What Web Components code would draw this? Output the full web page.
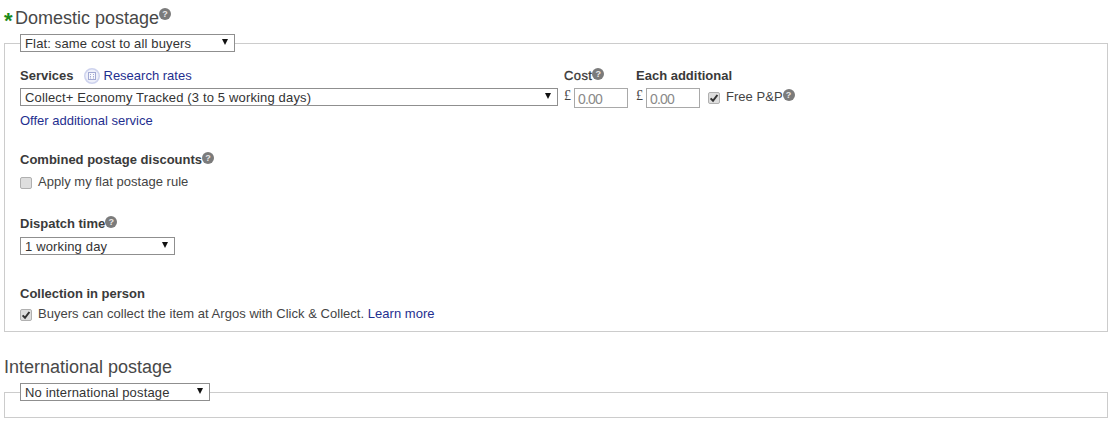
<!DOCTYPE html>
<html>
<head>
<meta charset="utf-8">
<title>Postage</title>
<style>
  html, body { margin: 0; background: #fff; }
  body { font: 13px/15px "Liberation Sans", Arial, sans-serif; color: #333; }
</style>
</head>
<body>
<template id="help-tpl">
  <style>
    :host { display: inline-block; width: 12px; height: 12px; border-radius: 50%; background: #7b7b7b; color: #e8e8e8;
      font: bold 9px/12px "Liberation Sans", Arial, sans-serif; text-align: center; vertical-align: 3px; }
  </style>?
</template>
<template id="select-tpl">
  <style>
    :host { display: inline-flex; align-items: center; justify-content: space-between; box-sizing: border-box; height: 18px;
      border: 1px solid #8f8f8f; background: #fff; color: #333; padding: 2px 6px 0 4px; font: 13px/16px "Liberation Sans", Arial, sans-serif;
      letter-spacing: .15px; white-space: nowrap; vertical-align: top; }
    svg { flex: none; margin-top: -4px; }
  </style>
  <slot></slot>
  <svg width="6" height="6" viewBox="0 0 6 6"><path d="M0 0h6L3 6z" fill="#111"/></svg>
</template>
<template id="check-tpl">
  <style>
    :host { display: flex; align-items: center; gap: 6px; color: #444; white-space: nowrap; letter-spacing: .03px; }
    .box { flex: none; box-sizing: border-box; width: 12px; height: 12px; margin-top: 2px; border: 1px solid #b0b0b0; border-radius: 2px; background: #dedede; display: flex; }
    svg { display: none; }
    :host([checked]) svg { display: block; }
  </style>
  <span class="box"><svg width="10" height="10" viewBox="0 0 10 10"><path d="M1.6 5.4 4 7.8 8.4 2" fill="none" stroke="#333" stroke-width="2"/></svg></span>
  <span><slot></slot></span>
</template>
<template id="money-tpl">
  <style>
    :host { display: flex; align-items: flex-start; color: #444; font: 13px/15px "Liberation Sans", Arial, sans-serif; }
    .cur { width: 10px; font: 14px/16px "Liberation Serif", serif; }
    input { box-sizing: border-box; width: 54px; height: 20px; margin: 0; padding: 1px 3px 0; border: 1px solid #a9a9a9; background: #fff; color: #8a8a8a;
      font: 14px/16px "Liberation Sans", Arial, sans-serif; letter-spacing: -.8px; outline: none; }
  </style>
  <span class="cur">£</span><input value="0.00">
</template>
<template id="section-tpl">
  <style>
    :host { display: block; }
    h2 { margin: 0 0 5px; font: normal 18px/21px "Liberation Sans", Arial, sans-serif; color: #484848; display: flex; align-items: flex-start; }
    .req { display: none; width: 11px; height: 21px; color: #1a8a1a; font: bold 22px/26px "Liberation Sans", Arial, sans-serif; }
    :host([required]) .req { display: inline-block; }
    fieldset { margin: 0; padding: 0 15px; border: 1px solid #ccc; min-width: 0; }
    legend { padding: 0; margin: 0; display: block; height: 18px; }
    ::slotted(post-select) { display: inline-flex; }
  </style>
  <h2><span class="req">*</span><span><slot name="title"></slot></span></h2>
  <fieldset>
    <legend><slot name="mode"></slot></legend>
    <slot></slot>
  </fieldset>
</template>
<template id="domestic-tpl">
  <style>
    :host { display: block; }
    a { color: #1f2f8f; text-decoration: none; }
    b { color: #3a3a3a; }
    .services { display: flex; margin-top: 15px; }
    .svc { width: 538px; margin-right: 6px; }
    .head { display: flex; align-items: center; height: 17px; margin-bottom: 4px; white-space: nowrap; }
    .head b { margin-right: 10px; }
    .calc { margin-right: 4px; }
    .cost, .add { width: 72px; }
    .free { padding-top: 22px; }
    .offer { display: block; margin-top: 7px; }
    .block > div:first-child { height: 15px; margin-bottom: 7px; }
    .dispatch > div:first-child { margin-bottom: 6px; }
    .collect { margin-top: 31px; }
    .collect > div:first-child { margin-bottom: 5px; }
    .end { height: 10px; }
  </style>
  <div class="services">
    <div class="svc">
      <div class="head"><b>Services</b>
        <svg class="calc" width="16" height="16" viewBox="0 0 16 16"><circle cx="8" cy="8" r="7.25" fill="#eef0fa" stroke="#ced3ee" stroke-width="1.5"/><rect x="4.5" y="4.5" width="7" height="7" fill="#f6f7fc" stroke="#a3aad4"/><path d="M6 6.5h1M9 6.5h1M6 8.5h1M9 8.5h1M6 10h1M9 10h1" stroke="#a3aad4"/></svg>
        <a href="#">Research rates</a></div>
      <post-select style="width:100%">Collect+ Economy Tracked (3 to 5 working days)</post-select>
      <a class="offer" href="#">Offer additional service</a>
    </div>
    <div class="cost"><div class="head"><b style="margin:0;font-weight:normal;-webkit-text-stroke:.3px #333;letter-spacing:.4px">Cost</b><help-icon style="margin-top:-4px"></help-icon></div><money-input></money-input></div>
    <div class="add"><div class="head"><b>Each additional</b></div><money-input></money-input></div>
    <div class="free"><check-row checked>Free P&amp;P<help-icon></help-icon></check-row></div>
  </div>
  <div class="block" style="margin-top:24px">
    <div><b>Combined postage discounts</b><help-icon></help-icon></div>
    <check-row>Apply my flat postage rule</check-row>
  </div>
  <div class="block dispatch" style="margin-top:27px">
    <div><b>Dispatch time</b><help-icon></help-icon></div>
    <post-select style="width:155px">1 working day</post-select>
  </div>
  <div class="block collect">
    <div><b>Collection in person</b></div>
    <check-row checked>Buyers can collect the item at Argos with Click &amp; Collect.&nbsp;<a href="#" style="color:#1f2f8f;text-decoration:none">Learn more</a></check-row>
  </div>
  <div class="end"></div>
</template>
<template id="page-tpl">
  <style>
    :host { display: block; padding: 8px 4px 0; }
    .intl { margin-top: 25px; }
    .pad { height: 16px; }
  </style>
  <post-section required>
    <span slot="title">Domestic postage<help-icon style="vertical-align:7px"></help-icon></span>
    <post-select slot="mode" style="width:215px">Flat: same cost to all buyers</post-select>
    <domestic-form></domestic-form>
  </post-section>
  <post-section class="intl">
    <span slot="title">International postage</span>
    <post-select slot="mode" style="width:190px">No international postage</post-select>
    <div class="pad"></div>
  </post-section>
</template>
<postage-page></postage-page>
<script>
  // every element is just a template stamped into an open shadow root
  const parts = {
    'help-icon': 'help-tpl',
    'post-select': 'select-tpl',
    'check-row': 'check-tpl',
    'money-input': 'money-tpl',
    'post-section': 'section-tpl',
    'domestic-form': 'domestic-tpl',
    'postage-page': 'page-tpl'
  };
  for (const [name, tpl] of Object.entries(parts)) {
    customElements.define(name, class extends HTMLElement {
      constructor() {
        super();
        this.attachShadow({ mode: 'open' });
        this.shadowRoot.appendChild(document.getElementById(tpl).content.cloneNode(true));
      }
    });
  }
</script>
</body>
</html>
